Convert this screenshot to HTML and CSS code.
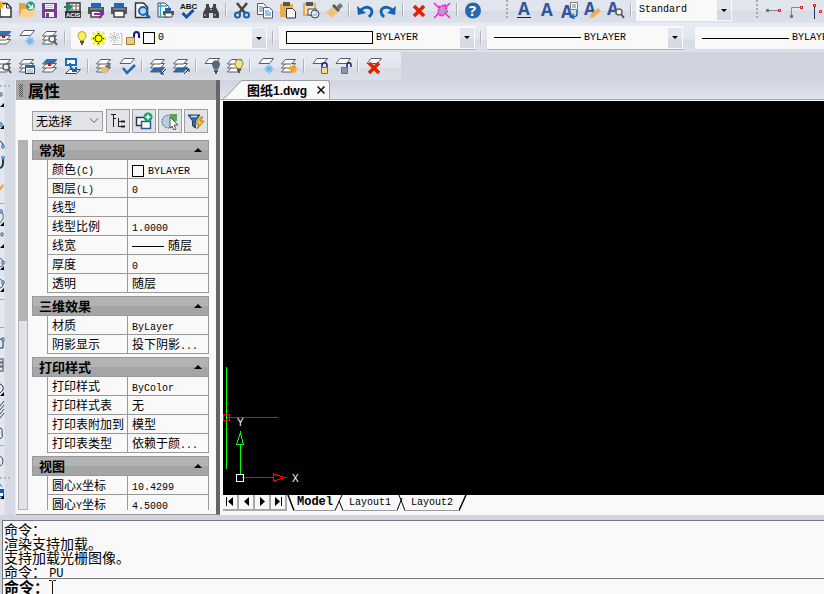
FILE: index.html
```html
<!DOCTYPE html>
<html lang="zh-CN">
<head>
<meta charset="utf-8">
<title>图纸1.dwg</title>
<link rel="stylesheet" href="styles.css">
</head>
<body>
<svg class="sprite" aria-hidden="true">
  <defs>
    <g id="sheet"><path d="M6 1.500h10.500l-4 5H2z" fill="#fff" stroke="#5c5c5c"/></g>
    <g id="stack"><path d="M5.500 10.500h10l-4 4.500h-10z" fill="#fff" stroke="#5c5c5c"/><path d="M5.500 6.500h10l-4 4.500h-10z" fill="#fff" stroke="#5c5c5c"/><path d="M5.500 2.500h10l-4 4.500h-10z" fill="#fff" stroke="#5c5c5c"/></g>
    <g id="flake"><path d="M0-4.500v9M-4.500 0h9M-3-3l6 6M3-3l-6 6" fill="none" stroke-width="1.500"/></g>
    <g id="lens"><circle r="3" fill="#f4f4f4" stroke="#666" stroke-width="1.500"/><path d="M2 2l3 4" stroke="#555" stroke-width="2"/></g>
    <g id="bulb"><path d="M-2 3.500C-2 1.500-4 1-4-1.500a4 4 0 0 1 8 0C4 1 2 1.500 2 3.500z"/><path d="M-2 5h4M-1 7h2" stroke="#555" stroke-width="2"/></g>
    <g id="cross"><path d="M-5-5L5 5M5-5L-5 5" stroke="#dc2400" stroke-width="3.500" fill="none"/></g>
  </defs>
  <symbol id="i-new" viewBox="0 0 18 18"><path d="M5 2.500h7l4 4V16H5z" fill="#fff" stroke="#333" stroke-width="1.500"/><path d="M11.500 2.500v4.500H16" fill="none" stroke="#333"/><use href="#flake" x="5" y="4" stroke="#f5a623"/></symbol>
  <symbol id="i-open" viewBox="0 0 18 18"><path d="M1 15.500V2h6l1 2h5v11.500z" fill="#e8a23a"/><path d="M1 16l3-8h14l-3 8z" fill="#ffd28a"/><circle cx="12.500" cy="5" r="4.500" fill="#18a077"/><path d="M10 3l4 4M14.500 3.500V7.500H10.500" fill="none" stroke="#fff" stroke-width="1.500"/></symbol>
  <symbol id="i-save" viewBox="0 0 18 18"><path d="M1 2h15v15H1z" fill="#743f91"/><path d="M4 3h9v5H4zM4 11h9v5H4z" fill="#f8f8f8"/><path d="M5 12h3v4H5z" fill="#743f91"/><path d="M5 4.500h7M5 6.500h7" stroke="#c5b2cf"/></symbol>
  <symbol id="i-acis" viewBox="0 0 18 18"><path d="M3 2h13v14H3z" fill="#fff" stroke="#333" stroke-width="1.500"/><path d="M8 2v14M12 2v14M3 5h13M3 9h13" stroke="#666"/><path d="M1 10h16v7H1z" fill="#333"/><text class="acis" x="2" y="16">ACIS</text><path d="M0 6h6M4 3l3 3-3 3" fill="none" stroke="#168861" stroke-width="2"/></symbol>
  <symbol id="i-print" viewBox="0 0 18 18"><path d="M4 2h10v4H4z" fill="#1a6dbb"/><path d="M1 6h16v7H1z" fill="#555"/><path d="M4 10h10v6H4z" fill="#fff" stroke="#444" stroke-width="1.500"/><path d="M3 8h12" stroke="#aaa"/></symbol>
  <symbol id="i-export" viewBox="0 0 18 18"><use href="#i-print" width="18" height="18"/><path d="M7 13h7M12 9.500l4 3.500-4 4" fill="none" stroke="#8a2d9d" stroke-width="2"/></symbol>
  <symbol id="i-preview" viewBox="0 0 18 18"><path d="M2.500 2h8l4 4v10.500h-12z" fill="#fff" stroke="#333" stroke-width="1.500"/><circle cx="10" cy="10" r="4" fill="#b5d5f2" stroke="#1763ae" stroke-width="2"/><path d="M13 13l4 4" stroke="#1763ae" stroke-width="2.500"/></symbol>
  <symbol id="i-publish" viewBox="0 0 18 18"><path d="M2 2h7l4 4v10H2z" fill="#fff" stroke="#444"/><path d="M4.500 2v14M2 5h9" stroke="#39a0d8" stroke-width="1.500"/><path d="M9 7h6v3H9z" fill="#1a6dbb"/><path d="M7 10h11v4H7z" fill="#555"/><path d="M9 12h7v4H9z" fill="#fff" stroke="#444"/></symbol>
  <symbol id="i-spell" viewBox="0 0 18 18"><text class="abc" x="1" y="8">ABC</text><path d="M3.500 12l4 4 7-7" fill="none" stroke="#174ea6" stroke-width="3"/></symbol>
  <symbol id="i-find" viewBox="0 0 18 18"><path d="M4 3h3v2l1 2h2l1-2V3h3v3l3 6v5h-6v-5H7v5H1v-5l3-6z" fill="#444"/><path d="M3 13v2M13 13v2M8 8.500h2" stroke="#ccc"/></symbol>
  <symbol id="i-cut" viewBox="0 0 18 18"><path d="M4 2l8 10M14 2L6 12" stroke="#444" stroke-width="2.500"/><circle cx="4.500" cy="14" r="2.500" fill="none" stroke="#1763ae" stroke-width="2"/><circle cx="13.500" cy="14" r="2.500" fill="none" stroke="#1763ae" stroke-width="2"/></symbol>
  <symbol id="i-copy" viewBox="0 0 18 18"><path d="M1.500 2.500h6l3 3v8h-9z" fill="#fff" stroke="#557"/><path d="M7.500 6.500h6l3 3V17h-9z" fill="#fff" stroke="#557"/><path d="M3 6h4M3 8h4M3 10h4M9 10h4M9 12h6M9 14h6" stroke="#3c83c4"/></symbol>
  <symbol id="i-paste" viewBox="0 0 18 18"><path d="M1 3h13v13H1z" fill="#e9ad52"/><path d="M4 1h7v4H4z" fill="#555"/><path d="M7.500 7.500h6l3 3V17h-9z" fill="#fff" stroke="#333"/></symbol>
  <symbol id="i-pastespec" viewBox="0 0 18 18"><path d="M2 3h11v11H2z" fill="#f6dfb9" stroke="#e9ad52" stroke-width="2"/><path d="M4 1h7v4H4z" fill="#555"/><rect x="6" y="8" width="8" height="6" fill="#fff" stroke="#445"/><circle cx="13" cy="13" r="4" fill="#dce5f0" fill-opacity=".7" stroke="#346"/></symbol>
  <symbol id="i-brush" viewBox="0 0 18 18"><path d="M1 12l6-6 6 5-6 6z" fill="#efc27c"/><path d="M7 5l6 6 2-2-6-6z" fill="#555"/><path d="M11 6l4-4 3 3-4 4z" fill="#777"/></symbol>
  <symbol id="i-undo" viewBox="0 0 18 18"><path d="M1 5l1 9 8-2z" fill="#1462b5"/><path d="M4 10c3-4 8-5 11-2 2 3 1 5-2 8" fill="none" stroke="#1462b5" stroke-width="3"/></symbol>
  <symbol id="i-redo" viewBox="0 0 18 18"><path d="M17 5l-1 9-8-2z" fill="#1462b5"/><path d="M14 10C11 6 6 5 3 8c-2 3-1 5 2 8" fill="none" stroke="#1462b5" stroke-width="3"/></symbol>
  <symbol id="i-delete" viewBox="0 0 18 18"><use href="#cross" x="9" y="10"/></symbol>
  <symbol id="i-purge" viewBox="0 0 18 18"><path d="M1 2l4 4M17 2l-5 5M1 17l5-5M17 17l-4-4" stroke="#ff19e8" stroke-width="1.500"/><path d="M6 6l6-2 2 7-5 4-4-2z" fill="#aaa" stroke="#ff19e8" stroke-width="2" stroke-dasharray="2 1"/></symbol>
  <symbol id="i-help" viewBox="0 0 18 18"><circle cx="9" cy="9.500" r="8" fill="#2469ac"/><text class="mark" x="5" y="15">?</text></symbol>
  <symbol id="i-a-line" viewBox="0 0 18 18"><text class="letter" x="3" y="14">A</text><path d="M2 16.500h14" stroke="#222"/></symbol>
  <symbol id="i-a" viewBox="0 0 18 18"><text class="letter" x="3" y="15">A</text></symbol>
  <symbol id="i-a-doc" viewBox="0 0 18 18"><text class="letter" x="0" y="17">A</text><path d="M9.500 1.500h7v7h-7z" fill="#fff" stroke="#777"/><path d="M11 4h4M11 6h4" stroke="#777"/><path d="M16 9v4c0 2-2 3-5 3M13 13l-2.500 3 3 2" fill="none" stroke="#1763ae" stroke-width="1.500"/></symbol>
  <symbol id="i-a-edit" viewBox="0 0 18 18"><text class="letter" x="0" y="14">A</text><path d="M7 13l7-6 3 3-7 6-4 1z" fill="#efae47"/></symbol>
  <symbol id="i-a-find" viewBox="0 0 18 18"><text class="letter" x="0" y="14">A</text><use href="#lens" x="12" y="11"/></symbol>
  <symbol id="i-dim1" viewBox="0 0 18 18"><path d="M3 9.500h12" stroke="#888"/><path d="M1 8h3v3H1z" fill="#777"/><path d="M13.500 8.500h2v2h-2z" fill="#fff" stroke="#f00"/></symbol>
  <symbol id="i-dim2" viewBox="0 0 18 18"><path d="M3.500 14V6.500H13" fill="none" stroke="#888"/><path d="M2 14h3v3H2z" fill="#777"/><path d="M12.500 5.500h2v2h-2z" fill="#fff" stroke="#f00"/></symbol>
  <symbol id="i-dim3" viewBox="0 0 18 18"><path d="M3.500 6v12" stroke="#223a66"/><path d="M2.500 3.500h2v2h-2zM8.500 9.500h2v2h-2z" fill="#fff" stroke="#f00"/></symbol>

  <symbol id="i-lay-cur" viewBox="0 0 18 18"><use href="#stack"/><path d="M5.500 2.500h11l-4 4.500h-10z" fill="#2f70b4"/><path d="M7 6h3v3H7z" fill="#f00"/></symbol>
  <symbol id="i-lay-freeze" viewBox="0 0 18 18"><use href="#sheet"/><use href="#flake" x="12" y="12" stroke="#71b9f5"/></symbol>
  <symbol id="i-lay-find" viewBox="0 0 18 18"><use href="#stack"/><use href="#lens" x="11" y="10"/></symbol>
  <symbol id="i-lay-state" viewBox="0 0 18 18"><use href="#stack"/><path d="M7.500 8.500h9v8h-9z" fill="#fff" stroke="#335"/><path d="M7 8h10v3H7z" fill="#1a6dbb"/><path d="M9 13h6M9 15h6" stroke="#999"/></symbol>
  <symbol id="i-lay-move" viewBox="0 0 18 18"><path d="M2 2h10v6H2z" fill="#fff" stroke="#1a6dbb" stroke-width="2"/><path d="M5.500 12.500h11l-4 4h-11z" fill="#fff" stroke="#444"/><path d="M6 6c0 5 1 6 6 8M12 10v4H8" fill="none" stroke="#1763ae" stroke-width="2"/></symbol>
  <symbol id="i-lay-match" viewBox="0 0 18 18"><use href="#stack"/><path d="M5 12l5-3 4 4-5 4z" fill="#eebd79"/><path d="M10 9l4-3 2 2-3 4z" fill="#777"/></symbol>
  <symbol id="i-lay-ok" viewBox="0 0 18 18"><use href="#sheet"/><path d="M5 11l4 5 8-8" fill="none" stroke="#2469ac" stroke-width="2.500"/></symbol>
  <symbol id="i-lay-iso" viewBox="0 0 18 18"><use href="#stack"/><path d="M5.500 10.500h10l-4 4.500h-10z" fill="#2469ac"/><path d="M17 12l-5 5M12 14v3h3" fill="none" stroke="#222"/></symbol>
  <symbol id="i-lay-uniso" viewBox="0 0 18 18"><use href="#stack"/><path d="M5.500 10.500h10l-4 4.500h-10z" fill="#2469ac"/><path d="M12 17l5-5M14 12h3v3" fill="none" stroke="#222"/></symbol>
  <symbol id="i-lay-off" viewBox="0 0 18 18"><use href="#sheet"/><use href="#bulb" x="13" y="9" fill="#53687f"/></symbol>
  <symbol id="i-lay-on" viewBox="0 0 18 18"><use href="#stack"/><use href="#bulb" x="13" y="8" fill="#f3e773" stroke="#8c8750"/></symbol>
  <symbol id="i-lay-thaw" viewBox="0 0 18 18"><use href="#stack"/><use href="#flake" x="13" y="12" stroke="#f2a324"/></symbol>
  <symbol id="i-lay-lock" viewBox="0 0 18 18"><use href="#sheet"/><path d="M11 11V8c0-3 5-3 5 0v3" fill="none" stroke="#151b7d" stroke-width="1.500"/><path d="M10.500 10.500h6v6h-6z" fill="#f5dc8b" stroke="#8a6a20"/></symbol>
  <symbol id="i-lay-unlock" viewBox="0 0 18 18"><use href="#sheet"/><path d="M13 11V8c0-3 4-3 4 0v2" fill="none" stroke="#151b7d" stroke-width="1.500"/><path d="M7.500 10.500h6v6h-6z" fill="#8d979f" stroke="#68727b"/></symbol>
  <symbol id="i-lay-del" viewBox="0 0 18 18"><use href="#sheet"/><use href="#cross" x="9" y="11"/></symbol>

  <symbol id="i-bulb" viewBox="0 0 17 17"><use href="#bulb" x="9" y="7" fill="#fff04c" stroke="#b4a648"/></symbol>
  <symbol id="i-sun" viewBox="0 0 17 17"><path d="M8.500 1v15M1 8.500h15M3 3l11 11M14 3L3 14" stroke="#222" stroke-width="1.500"/><path d="M4 4h9v9H4z" fill="#ff0"/><circle cx="8.500" cy="8.500" r="3.500" fill="#ff0" stroke="#222"/><path d="M8.500 1v2M8.500 14v2M1 8.500h2M14 8.500h2M3 3l2 2M12 12l2 2M14 3l-2 2M5 12l-2 2" stroke="#ff0" stroke-width="2"/></symbol>
  <symbol id="i-vpfreeze" viewBox="0 0 17 17"><path d="M13 3.500h2v11H5" fill="none" stroke="#bbb"/><path d="M7.500 2v11M2 7.500h11M3.500 3.500l8 8M11.500 3.500l-8 8" stroke="#b0b0b0" stroke-width="1.500" stroke-dasharray="1 1"/></symbol>
  <symbol id="i-openlock" viewBox="0 0 17 17"><path d="M10 8V5c0-4 5-4 5 0v3" fill="none" stroke="#151b7d" stroke-width="2"/><path d="M2.500 7.500h8v7h-8z" fill="#eccb7d" stroke="#a07a32"/></symbol>

  <symbol id="i-tree" viewBox="0 0 18 18"><path d="M2 2.500h5M4.500 3v12M4.500 6.500H7M9.500 6v9M9.500 9.500H12M9.500 14.500H12" fill="none" stroke="#222"/><path d="M12 9.500h4M12 14.500h4" stroke="#222" stroke-width="2"/></symbol>
  <symbol id="i-add" viewBox="0 0 18 18"><path d="M1.500 5.500h10v8h-10z" fill="#fff" stroke="#334" stroke-width="1.500"/><path d="M6.500 9.500h9v7h-9z" fill="#fff" stroke="#245b91" stroke-width="1.500"/><circle cx="13" cy="5" r="4.500" fill="#18a06c"/><path d="M13 2.500v5M10.500 5h5" stroke="#fff" stroke-width="1.500"/></symbol>
  <symbol id="i-pick" viewBox="0 0 18 18"><circle cx="7.500" cy="9.500" r="6.500" fill="#b9cce0" stroke="#456080" stroke-dasharray="2 1"/><path d="M9 2h7v7H9z" fill="#54a654"/><path d="M9 5l8 8h-4l2 4-2 1-2-4-2 2z" fill="#fff" stroke="#555"/></symbol>
  <symbol id="i-filter" viewBox="0 0 18 18"><path d="M1 3h12L8.500 9v7l-3-2V9z" fill="#2c69a7" stroke="#345"/><path d="M4 4.500h6" stroke="#bfe0ff" stroke-width="1.500"/><path d="M14 5l-6 7h4l-2 5 7-8h-4l3-4z" fill="#ffc928" stroke="#b87616"/></symbol>
</svg>

<header class="bars">
  <div class="bar" role="toolbar" aria-label="标准">
    <div class="run lead">
      <button class="tool" aria-label="新建"><svg><use href="#i-new"/></svg></button>
      <button class="tool" aria-label="打开"><svg><use href="#i-open"/></svg></button>
      <button class="tool" aria-label="保存"><svg><use href="#i-save"/></svg></button>
      <button class="tool" aria-label="ACIS"><svg><use href="#i-acis"/></svg></button>
      <button class="tool" aria-label="输出"><svg><use href="#i-export"/></svg></button>
      <button class="tool" aria-label="打印"><svg><use href="#i-print"/></svg></button>
      <button class="tool" aria-label="预览"><svg><use href="#i-preview"/></svg></button>
      <button class="tool" aria-label="发布"><svg><use href="#i-publish"/></svg></button>
      <button class="tool" aria-label="拼写检查"><svg><use href="#i-spell"/></svg></button>
      <button class="tool" aria-label="查找"><svg><use href="#i-find"/></svg></button>
      <i class="sep"></i>
      <button class="tool" aria-label="剪切"><svg><use href="#i-cut"/></svg></button>
      <button class="tool" aria-label="复制"><svg><use href="#i-copy"/></svg></button>
      <button class="tool" aria-label="粘贴"><svg><use href="#i-paste"/></svg></button>
      <button class="tool" aria-label="选择性粘贴"><svg><use href="#i-pastespec"/></svg></button>
      <button class="tool" aria-label="特性匹配"><svg><use href="#i-brush"/></svg></button>
      <i class="sep"></i>
      <button class="tool" aria-label="放弃"><svg><use href="#i-undo"/></svg></button>
      <button class="tool" aria-label="重做"><svg><use href="#i-redo"/></svg></button>
      <i class="sep"></i>
      <button class="tool" aria-label="删除"><svg><use href="#i-delete"/></svg></button>
      <button class="tool" aria-label="清理"><svg><use href="#i-purge"/></svg></button>
      <i class="sep"></i>
      <button class="tool" aria-label="帮助"><svg><use href="#i-help"/></svg></button>
    </div>
    <div class="run next">
      <i class="grip"></i>
      <button class="tool" aria-label="多行文字"><svg><use href="#i-a-line"/></svg></button>
      <button class="tool" aria-label="单行文字"><svg><use href="#i-a"/></svg></button>
      <button class="tool" aria-label="文字样式"><svg><use href="#i-a-doc"/></svg></button>
      <button class="tool" aria-label="编辑文字"><svg><use href="#i-a-edit"/></svg></button>
      <button class="tool" aria-label="查找文字"><svg><use href="#i-a-find"/></svg></button>
      <i class="sep"></i>
      <div class="combo style-combo"><select aria-label="文字样式"><option>Standard</option></select><i class="arrow"></i></div>
    </div>
    <div class="run next">
      <i class="grip"></i>
      <button class="tool" aria-label="线性标注"><svg><use href="#i-dim1"/></svg></button>
      <button class="tool" aria-label="对齐标注"><svg><use href="#i-dim2"/></svg></button>
      <button class="tool" aria-label="坐标标注"><svg><use href="#i-dim3"/></svg></button>
    </div>
  </div>

  <div class="bar tall" role="toolbar" aria-label="图层和特性">
    <div class="run lead">
      <button class="tool" aria-label="当前图层"><svg><use href="#i-lay-cur"/></svg></button>
      <button class="tool" aria-label="冻结图层"><svg><use href="#i-lay-freeze"/></svg></button>
      <button class="tool" aria-label="查找图层"><svg><use href="#i-lay-find"/></svg></button>
      <i class="sep"></i>
      <div class="combo layer-combo">
        <svg><use href="#i-bulb"/></svg><svg><use href="#i-sun"/></svg><svg><use href="#i-vpfreeze"/></svg><svg><use href="#i-openlock"/></svg>
        <i class="chip"></i><select aria-label="图层"><option>0</option></select><i class="arrow"></i>
      </div>
      <i class="sep"></i>
      <div class="combo ruled"><i class="swatch"></i><select aria-label="颜色"><option>BYLAYER</option></select><i class="arrow"></i></div>
      <i class="sep"></i>
      <div class="combo ruled"><i class="rule"></i><select aria-label="线型"><option>BYLAYER</option></select><i class="arrow"></i></div>
      <i class="gap"></i>
      <div class="combo"><i class="rule"></i><select aria-label="线宽"><option>BYLAYER</option></select><i class="arrow"></i></div>
    </div>
  </div>

  <div class="bar tall short" role="toolbar" aria-label="图层工具">
    <div class="run lead">
      <button class="tool" aria-label="图层浏览"><svg><use href="#i-lay-find"/></svg></button>
      <button class="tool" aria-label="图层状态"><svg><use href="#i-lay-state"/></svg></button>
      <button class="tool" aria-label="置为当前"><svg><use href="#i-lay-cur"/></svg></button>
      <button class="tool" aria-label="移至图层"><svg><use href="#i-lay-move"/></svg></button>
      <i class="sep"></i>
      <button class="tool" aria-label="图层匹配"><svg><use href="#i-lay-match"/></svg></button>
      <button class="tool" aria-label="更改为当前"><svg><use href="#i-lay-ok"/></svg></button>
      <i class="sep"></i>
      <button class="tool" aria-label="隔离"><svg><use href="#i-lay-iso"/></svg></button>
      <button class="tool" aria-label="取消隔离"><svg><use href="#i-lay-uniso"/></svg></button>
      <i class="sep"></i>
      <button class="tool" aria-label="关闭图层"><svg><use href="#i-lay-off"/></svg></button>
      <button class="tool" aria-label="打开图层"><svg><use href="#i-lay-on"/></svg></button>
      <i class="sep"></i>
      <button class="tool" aria-label="冻结"><svg><use href="#i-lay-freeze"/></svg></button>
      <button class="tool" aria-label="解冻"><svg><use href="#i-lay-thaw"/></svg></button>
      <i class="sep"></i>
      <button class="tool" aria-label="锁定"><svg><use href="#i-lay-lock"/></svg></button>
      <button class="tool" aria-label="解锁"><svg><use href="#i-lay-unlock"/></svg></button>
      <i class="sep"></i>
      <button class="tool" aria-label="删除图层"><svg><use href="#i-lay-del"/></svg></button>
    </div>
  </div>
</header>

<main class="work">
  <nav class="draw" aria-label="绘图">
    <i class="dots"></i>
    <button aria-label="直线"><svg viewBox="0 0 5 22"><path d="M0 3h2v3H0z" fill="#fff" stroke="#2465ac"/><path d="M4 13v4H0z"/></svg></button>
    <button aria-label="构造线"><svg viewBox="0 0 5 22"><path d="M0 11h2v3H0z" fill="#fff" stroke="#2465ac"/><path d="M4 13v4H0z"/></svg></button>
    <button aria-label="多段线"><svg viewBox="0 0 5 22"><path d="M0 7q3 1 3 5" fill="none" stroke="#234"/><path d="M2 11h2v3H2z" fill="#fff" stroke="#2465ac"/></svg></button>
    <button aria-label="圆弧"><svg viewBox="0 0 5 22"><path d="M3 1v6q0 4-3 5" fill="none" stroke="#234" stroke-width="2"/><path d="M2 0h2v3H2z" fill="#fff" stroke="#2465ac"/></svg></button>
    <button aria-label="徒手画"><svg viewBox="0 0 5 22"><path d="M0 9l3-3 1 2-4 5z" fill="#efa63c"/></svg></button>
    <i class="bar-sep"></i>
    <button aria-label="圆"><svg viewBox="0 0 5 22"><path d="M0 2q4 3 3 9l-3 4" fill="none" stroke="#567"/><path d="M0 2h2v3H0z" fill="#fff" stroke="#2465ac"/><path d="M4 14v4H0z"/></svg></button>
    <button aria-label="椭圆"><svg viewBox="0 0 5 22"><path d="M1 3h2v3H1z" fill="#fff" stroke="#2465ac"/><path d="M4 14v4H0z"/></svg></button>
    <button aria-label="样条"><svg viewBox="0 0 5 22"><path d="M0 6q3 1 3 5t-3 4" fill="none" stroke="#567"/><path d="M2 9h2v3H2z" fill="#fff" stroke="#2465ac"/><path d="M4 14v4H0z"/></svg></button>
    <button aria-label="云线"><svg viewBox="0 0 5 22"><path d="M0 5q3 1 3 5t-3 4" fill="none" stroke="#567"/><path d="M2 7h2v3H2z" fill="#fff" stroke="#2465ac"/><path d="M4 14v4H0z"/></svg></button>
    <i class="bar-sep"></i>
    <i class="blank"></i>
    <i class="bar-sep"></i>
    <button aria-label="矩形"><svg viewBox="0 0 5 22"><path d="M0 7h3v9H0" fill="none" stroke="#234"/><path d="M2 6h2v3H2z" fill="#fff" stroke="#2465ac"/></svg></button>
    <button aria-label="螺旋"><svg viewBox="0 0 5 22"><path d="M0 5h3v3H0M0 9h3v3H0M0 13h3v4H0" fill="none" stroke="#777" stroke-width="1.500"/></svg></button>
    <button aria-label="区域"><svg viewBox="0 0 5 22"><path d="M0 8q4 1 3 6l-3 3" fill="none" stroke="#234"/><path d="M4 16v4H0z"/></svg></button>
    <button aria-label="填充"><svg viewBox="0 0 5 22"><path d="M0 8l4-5M0 12l4-5M0 16l4-5M0 20l4-5" stroke="#345"/></svg></button>
    <button aria-label="修订"><svg viewBox="0 0 5 22"><path d="M0 8q3 0 2 5 2 4-2 6" fill="none" stroke="#246"/></svg></button>
    <i class="bar-sep"></i>
    <button aria-label="点"><svg viewBox="0 0 5 22"><path d="M0 6q3 1 3 5t-3 5" fill="none" stroke="#456"/></svg></button>
    <i class="dots"></i>
    <button aria-label="块"><svg viewBox="0 0 5 22"><path d="M0 2l2 3" stroke="#2787d0"/><path d="M0 7h4v8H0z" fill="#0a5db1"/><path d="M0 11h3v3H0z" fill="#fff"/><path d="M4 13v4H0z"/></svg></button>
  </nav>

  <aside class="panel">
    <header class="panel-title"><i class="handle"></i><h1>属性</h1></header>
    <div class="picker">
      <div class="pick-select"><select aria-label="选择"><option>无选择</option></select><svg viewBox="0 0 10 6"><path d="M1 0.500l4 4 4-4" fill="none" stroke="#555"/></svg></div>
      <button aria-label="分类"><svg><use href="#i-tree"/></svg></button>
      <button aria-label="切换添加"><svg><use href="#i-add"/></svg></button>
      <button aria-label="选择对象"><svg><use href="#i-pick"/></svg></button>
      <button aria-label="快速选择"><svg><use href="#i-filter"/></svg></button>
    </div>
    <div class="props">
      <div class="scroll"><i class="thumb"></i></div>
      <div class="sections">
        <section>
          <button class="fold">常规<i></i></button>
          <table>
            <tr><th>颜色<span>(C)</span></th><td><i class="chip"></i><span>BYLAYER</span></td></tr>
            <tr><th>图层<span>(L)</span></th><td><span>0</span></td></tr>
            <tr><th>线型</th><td></td></tr>
            <tr><th>线型比例</th><td><span>1.0000</span></td></tr>
            <tr><th>线宽</th><td><i class="dash"></i>随层</td></tr>
            <tr><th>厚度</th><td><span>0</span></td></tr>
            <tr><th>透明</th><td>随层</td></tr>
          </table>
        </section>
        <section>
          <button class="fold">三维效果<i></i></button>
          <table>
            <tr><th>材质</th><td><span>ByLayer</span></td></tr>
            <tr><th>阴影显示</th><td>投下阴影<span>...</span></td></tr>
          </table>
        </section>
        <section>
          <button class="fold">打印样式<i></i></button>
          <table>
            <tr><th>打印样式</th><td><span>ByColor</span></td></tr>
            <tr><th>打印样式表</th><td>无</td></tr>
            <tr><th>打印表附加到</th><td>模型</td></tr>
            <tr><th>打印表类型</th><td>依赖于颜<span>...</span></td></tr>
          </table>
        </section>
        <section>
          <button class="fold">视图<i></i></button>
          <table>
            <tr><th>圆心<span>X</span>坐标</th><td><span>10.4299</span></td></tr>
            <tr><th>圆心<span>Y</span>坐标</th><td><span>4.5000</span></td></tr>
          </table>
        </section>
      </div>
    </div>
  </aside>

  <section class="doc">
    <div class="doc-tabs">
      <svg class="slope" viewBox="0 0 20 19"><path d="M0 19L4 16 17 2Q18 .5 20 .5V19z" fill="#f9f9f9"/><path d="M0 18.500L4 16 17 2Q18 .5 20 .5" fill="none" stroke="#9a9da6"/></svg>
      <div class="doc-tab"><span>图纸<b>1.dwg</b></span><button aria-label="关闭"><svg viewBox="0 0 8 8"><path d="M.5.5l7 7M7.500.5l-7 7" stroke="#111" stroke-width="1.500"/></svg></button></div>
    </div>
    <div class="stage">
      <svg viewBox="0 0 85 135" shape-rendering="crispEdges" fill="none">
        <path d="M3.500 7v102" stroke="#0f0"/>
        <path d="M3 57.500h52" stroke="#f00"/>
        <path d="M.5 54.500h6v6h-6z" stroke="#f00"/>
        <path d="M3 57.500h1" stroke="#ff0"/>
        <path d="M17.500 84v31M13.500 84.500h7L17.500 73z" stroke="#0f0"/>
        <path d="M19 117.500h31M50.500 114v7L62 117.500z" stroke="#f00"/>
        <path d="M13.500 114.500h7v7h-7z" stroke="#fff"/>
        <text x="14" y="66">Y</text><text x="69" y="122">X</text>
      </svg>
    </div>
    <div class="layouts">
      <button class="step" aria-label="第一个"><svg viewBox="0 0 12 10"><path d="M2 0h1v9H2zM9 0v9L4 4.500z"/></svg></button>
      <button class="step" aria-label="上一个"><svg viewBox="0 0 12 10"><path d="M9 0v9L4 4.500z"/></svg></button>
      <button class="step" aria-label="下一个"><svg viewBox="0 0 12 10"><path d="M4 0v9l5-4.500z"/></svg></button>
      <button class="step" aria-label="最后一个"><svg viewBox="0 0 12 10"><path d="M3 0v9l5-4.500zM9 0h1v9H9z"/></svg></button>
      <svg class="edge" viewBox="0 0 8 16"><path d="M1 0l6 15.500" fill="none" stroke="#000" stroke-width="1.500"/></svg>
      <button class="sheet-tab on">Model</button>
      <svg class="edge" viewBox="0 0 8 16"><path d="M0 15.500L7 0M4 6l4 9.500" fill="none" stroke="#000"/></svg>
      <button class="sheet-tab">Layout1</button>
      <svg class="edge" viewBox="0 0 8 16"><path d="M0 15.500L5 3M2 0l6 15.500" fill="none" stroke="#000"/></svg>
      <button class="sheet-tab">Layout2</button>
      <svg class="edge" viewBox="0 0 8 16"><path d="M0 15.500L7 0" fill="none" stroke="#000" stroke-width="1.500"/></svg>
    </div>
  </section>
</main>

<footer class="console">
  <div class="log"><p>命令：</p><p>渲染支持加载。</p><p>支持加载光栅图像。</p><p>命令： <span>PU</span></p></div>
  <div class="prompt"><label for="cmd">命令：</label><svg viewBox="0 0 7 16"><path d="M0 1.500h2.500l1 1 1-1H7M3.500 2v14" fill="none" stroke="#111"/></svg><input id="cmd" type="text"></div>
</footer>
</body>
</html>
```
FILE: styles.css
```css
* { box-sizing: border-box; }
body {
  margin: 0;
  height: 100vh;
  overflow: hidden;
  display: flex;
  flex-direction: column;
  background: #d0d4de;
  color: #000;
  font: 12px/18px "Noto Sans CJK SC", sans-serif;
}
button, select, input { font: inherit; color: inherit; border: 0; padding: 0; margin: 0; background: none; }
button { display: flex; align-items: center; justify-content: center; flex: none; }
select { appearance: none; outline: 0; }
svg { display: block; flex: none; }
i { display: block; flex: none; }
.sprite { position: absolute; width: 0; height: 0; }
.letter { font: bold 17px "Open Sans", sans-serif; fill: #33539b; }
.abc { font: bold 8px "Liberation Sans", sans-serif; fill: #111; }
.acis { font: bold 6px "Liberation Sans", sans-serif; fill: #fff; }
.mark { font: bold 15px "Open Sans", sans-serif; fill: #fff; }

/* toolbars */
.bars { flex: none; overflow: hidden; }
.bar { display: flex; height: 24px; overflow: hidden; background: linear-gradient(#e0e5ee 0 45%, #d6dbe5 46%, #dbe0e9 90%, #e6ebf4); }
.bar.tall { height: 28px; background: linear-gradient(#e6ebf5, #e0e5ee 55%, #d6dbe5 56%, #dbe0e9); }
.bar.short { width: 401px; border-radius: 0 3px 0 0; }
.run { display: flex; align-items: center; flex: none; }
.bar:first-child .run { height: 20px; }
.lead { margin-left: -8px; }
.next { margin-left: 22px; }
.tool { width: 23px; height: 20px; }
.tool svg { width: 18px; height: 18px; }
.sep { width: 2px; height: 14px; margin: 0 3px; background: linear-gradient(90deg, #b0b2b8 50%, #f4f6fa 50%); }
.grip { width: 2px; height: 20px; margin-right: 4px; background: repeating-linear-gradient(#a5a8b0 0 2px, transparent 2px 4px); }
.gap { width: 8px; }
.combo { display: flex; align-items: center; width: 196px; height: 22px; margin: 0 2px; background: #f9f9f9; }
.combo select { flex: 1; min-width: 0; padding-left: 3px; font: 10px/18px "Liberation Mono", monospace; }
.ruled { height: 24px; border-bottom: 1px solid #b0b0b0; }
.style-combo { width: 96px; margin-left: 1px; }
.layer-combo { padding-left: 2px; }
.layer-combo svg { width: 17px; height: 17px; }
.arrow { display: flex; align-items: center; justify-content: center; width: 14px; height: 20px; margin-right: 1px; background: linear-gradient(#e2e6ee 50%, #d4d9e3 50%); }
.arrow::before { content: ""; border: 3px solid transparent; border-top-color: #000; border-bottom: 0; }
.chip { width: 12px; height: 12px; border: 1px solid #000; }
.layer-combo .chip { margin-left: 2px; }
.swatch { width: 87px; height: 13px; margin-left: 7px; border: 1px solid #000; }
.rule { width: 87px; height: 1px; margin-left: 7px; background: #000; }

/* work area */
.work { flex: 1; min-height: 0; display: flex; }
.draw { display: flex; flex-direction: column; width: 16px; overflow: hidden; background: linear-gradient(90deg, #e2e7f0 4px, #d5dae5 5px 15px, #e6e9ef 15px); }
.draw button { justify-content: flex-start; height: 22px; }
.draw svg { width: 5px; height: 22px; }
.draw i { flex: none; }
.dots { width: 12px; height: 2px; margin: 5px 0 3px; background: repeating-linear-gradient(90deg, #b4b7bf 0 2px, transparent 2px 4px); }
.bar-sep { width: 4px; height: 1px; margin: 3px 0 4px; background: #a5a8b0; }
.blank { height: 20px; }

.panel { display: flex; flex-direction: column; width: 204px; flex: none; background: #f9f9f9; border-right: 4px solid #666; border-bottom: 1px solid #999; }
.panel-title { display: flex; align-items: center; height: 20px; flex: none; background: #a6a6a6; }
.handle { width: 4px; height: 13px; margin: 0 5px 0 3px; background: repeating-conic-gradient(#555 0 25%, #a6a6a6 0 50%) 0 0 / 2px 2px; }
.panel-title h1 { margin: 0; font-size: 16px; line-height: 20px; }
.picker { display: flex; align-items: center; gap: 2px; padding: 9px 0 7px 16px; }
.picker button, .pick-select { height: 24px; border: 1px solid #9d9d9d; background: #e2e3e8; }
.picker button { width: 24px; }
.picker button svg { width: 18px; height: 18px; }
.pick-select { display: flex; align-items: center; width: 71px; height: 20px; margin-right: 1px; padding: 0 3px; }
.pick-select select { flex: 1; min-width: 0; }
.pick-select svg { width: 10px; height: 6px; }
.props { display: flex; flex: 1; min-height: 0; gap: 4px; padding: 0 7px 4px 2px; }
.scroll { width: 10px; background: #e2e3e8; border: 1px solid #b3b3b3; }
.thumb { height: 49%; background: #b3b3b3; }
.sections { display: flex; flex-direction: column; gap: 3px; flex: 1; min-width: 0; overflow: hidden; }
.sections section { flex: none; }
.fold { width: 100%; height: 20px; padding: 0 6px; justify-content: space-between; border: 1px solid #999; background: linear-gradient(#b3b3b3 50%, #a5a5a5 50%); font-size: 13px; font-weight: bold; line-height: 18px; }
.fold i { border: 4px solid transparent; border-bottom-color: #000; border-top: 0; }
table { width: 162px; margin-left: 15px; border-spacing: 0; table-layout: fixed; border-left: 1px solid #999; }
th, td { height: 19px; padding: 0 0 0 4px; border: solid #999; border-width: 0 1px 1px 0; text-align: left; font-weight: normal; line-height: 16px; white-space: nowrap; overflow: hidden; }
th { width: 80px; }
td span, th span, .log span { font-family: "Liberation Mono", monospace; font-size: 10px; line-height: 1; }
td .chip, .dash { display: inline-block; vertical-align: middle; margin-right: 4px; }
.dash { width: 32px; height: 1px; background: #000; }

/* drawing */
.doc { display: flex; flex-direction: column; flex: 1; min-width: 0; background: #f9f9f9; }
.doc-tabs { display: flex; height: 20px; flex: none; padding: 0 0 0 3px; background: linear-gradient(#d0d4de, #e0e4ee); border-bottom: 1px solid #a5a8b0; }
.slope { width: 20px; height: 19px; }
.doc-tab { display: flex; align-items: center; gap: 10px; padding: 0 4px; background: #f9f9f9; border: solid #9a9da6; border-width: 1px 1px 0 0; border-radius: 0 3px 0 0; font-size: 13px; font-weight: bold; }
.doc-tab b { font-family: "Liberation Sans", sans-serif; font-size: 12px; }
.doc-tab svg { width: 8px; height: 8px; }
.stage { display: flex; align-items: flex-end; flex: 1; min-height: 0; margin: 1px 0 0 3px; background: #000; }
.stage svg { width: 85px; height: 135px; }
.stage text { fill: #fff; font: 10px "Liberation Sans", sans-serif; }
.layouts { display: flex; align-items: flex-start; height: 20px; flex: none; padding-left: 3px; }
.step { width: 16px; height: 16px; border: solid #a9a9a9; border-width: 0 2px 2px 0; }
.step svg { width: 12px; height: 10px; }
.edge { width: 8px; height: 16px; }
.sheet-tab { height: 16px; padding: 0 6px; border-bottom: 1px solid #999; font: 10px/15px "Liberation Mono", monospace; }
.sheet-tab.on { padding: 0 2px; font-size: 12px; font-weight: bold; }

/* command line */
.console { flex: none; margin-top: 5px; margin-left: 2px; border: solid #777; border-width: 1px 0 0 1px; background: #f9f9f9; }
.log { padding: 1px 0 0 1px; border-bottom: 1px solid #777; }
.log p { margin: 0; height: 14px; font-size: 14px; line-height: 14px; }
.log span { font-size: 12px; }
.prompt { display: flex; align-items: center; height: 15px; padding-left: 1px; overflow: hidden; }
.prompt label { font-size: 15px; font-weight: bold; line-height: 15px; }
.prompt svg { width: 7px; height: 16px; }
.prompt input { flex: 1; min-width: 0; outline: 0; }
```
